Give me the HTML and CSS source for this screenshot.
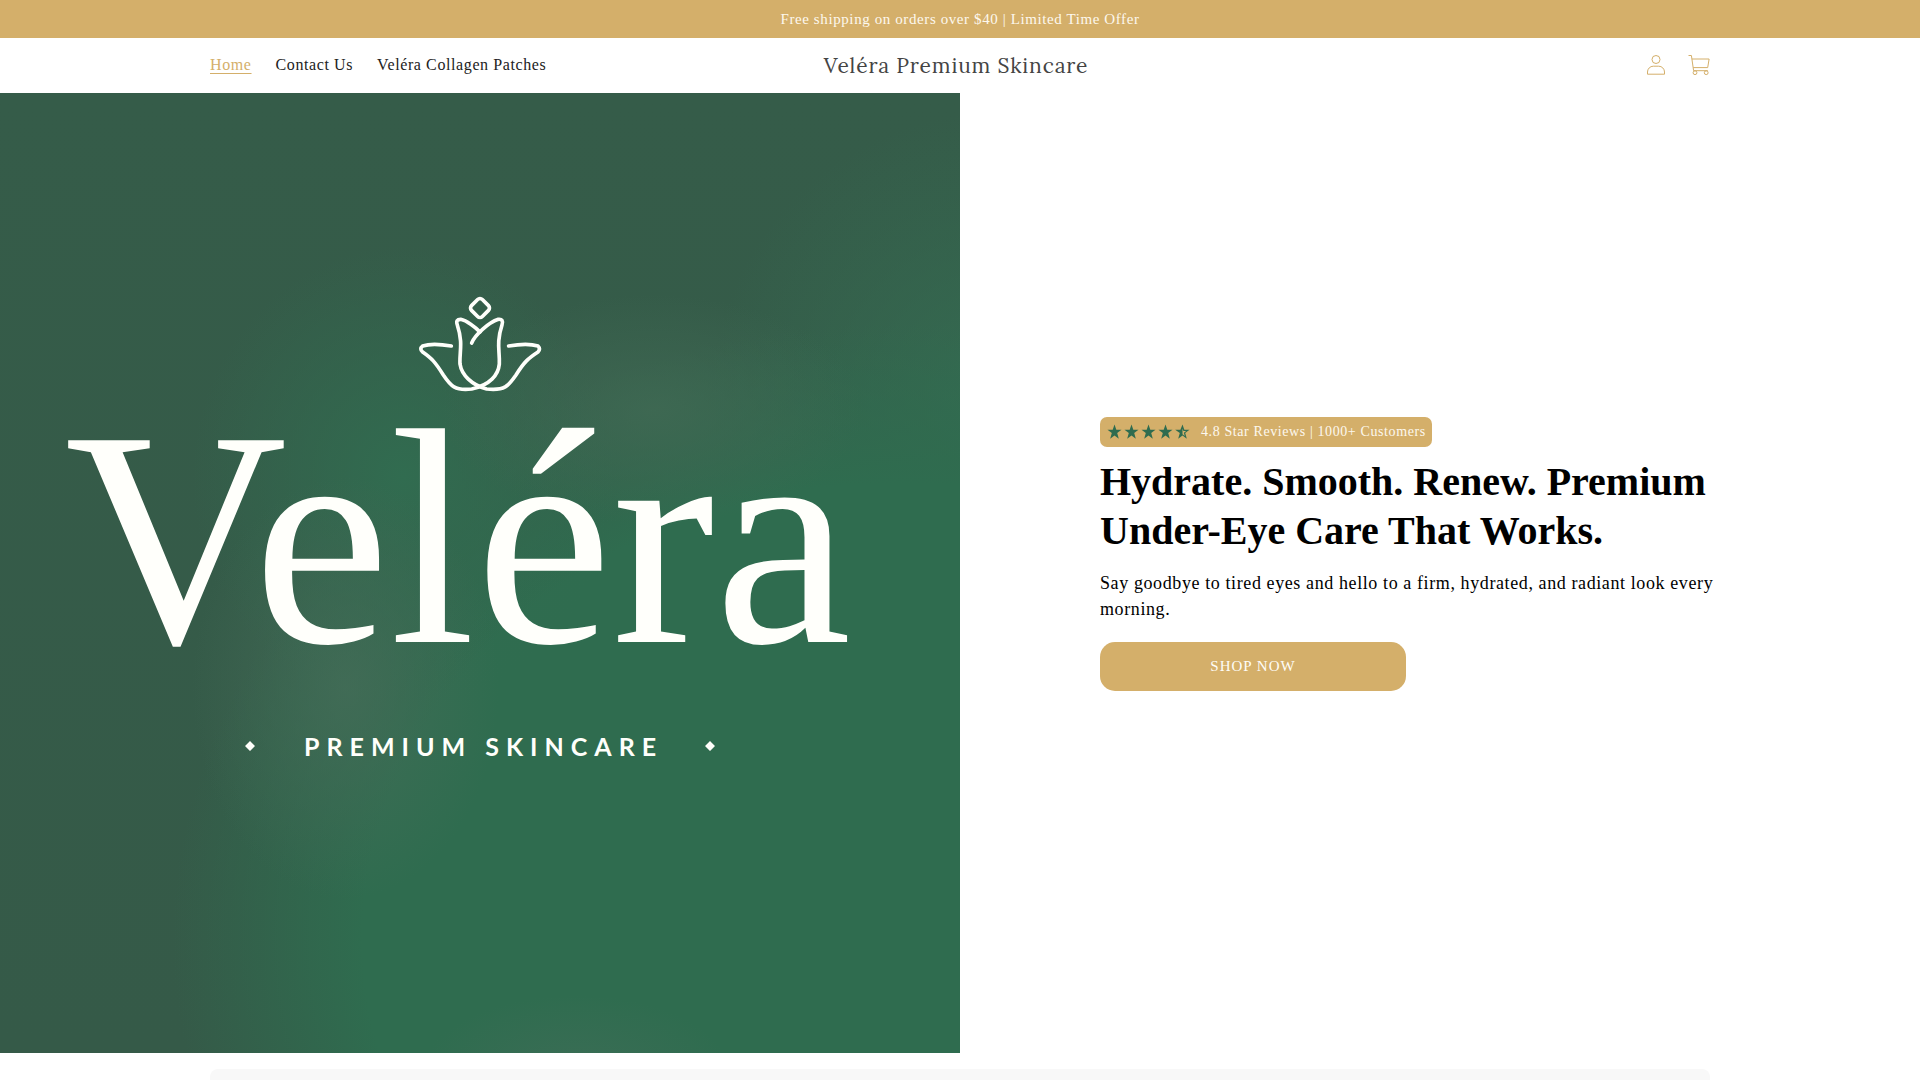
FILE: index.html
```html
<!DOCTYPE html>
<html lang="en">
<head>
    <meta charset="UTF-8">
    <meta name="viewport" content="width=device-width, initial-scale=1">
    <title>Veléra Premium Skincare</title>
    <link rel="stylesheet" href="styles.css">
</head>
<body>
    <div class="announcement">
        <p>Free shipping on orders over $40 | Limited Time Offer</p>
    </div>

    <header class="header">
        <nav class="menu">
            <a class="active" href="#">Home</a>
            <a href="#">Contact Us</a>
            <a href="#">Veléra Collagen Patches</a>
        </nav>
        <a class="shop-name" href="#">Veléra Premium Skincare</a>
        <div class="header-icons">
            <a href="#" aria-label="Log in">
                <svg viewBox="0 0 20 22" width="20" height="22">
                    <circle cx="10" cy="5.5" r="4"/>
                    <path d="M1.5 20.2V18a5.8 5.8 0 0 1 5.8-5.8h5.4a5.8 5.8 0 0 1 5.8 5.8v2.2z"/>
                </svg>
            </a>
            <a href="#" aria-label="Cart">
                <svg viewBox="0 0 22 22" width="22" height="22">
                    <path d="M.5 1.5h2.9l2.2 15.2h14.2"/>
                    <path d="M3.9 5h17.2l-1.4 8.6H5.2"/>
                    <circle cx="7" cy="18.7" r="1.9"/>
                    <circle cx="18.2" cy="18.7" r="1.9"/>
                </svg>
            </a>
        </div>
    </header>

    <main>
        <section class="hero">
            <div class="hero-image">
                <svg class="logo" viewBox="0 0 960 960" role="img" aria-label="Veléra Premium Skincare">
                    <!-- lotus -->
                    <g class="lotus" transform="translate(400 187) scale(.3333)">
                        <rect x="217" y="61" width="46" height="46" rx="10" transform="rotate(45 240 84)"/>
                        <path d="M215 189C225 165 265 128 295 118Q312 116 306 135C288 190 300 215 298 252C295 285 270 315 215 327C165 333 152 318 130 285C105 245 95 235 68 216Q57 207 68 198C85 192 120 192 154 198"/>
                        <path d="M240 156C225 140 200 122 182 118Q166 118 172 135C190 190 178 215 180 252C185 285 215 315 260 327C315 333 325 318 348 285C373 245 385 235 414 216Q423 207 414 198C395 192 360 192 326 198"/>
                    </g>
                    <text class="logo-name" x="458" y="549" text-anchor="middle">Veléra</text>
                    <text class="logo-sub" x="304" y="663">PREMIUM SKINCARE</text>
                    <path class="dot" d="M250 648l5 5-5 5-5-5zM710 648l5 5-5 5-5-5z"/>
                </svg>
            </div>

            <div class="hero-text">
                <div class="rating">
                    <svg viewBox="0 0 84 16" width="84" height="16">
                        <defs>
                            <path id="star" d="M7.5 .5l1.8 5.3h5.2l-4.3 3.3 1.6 5.6-4.3-3.3-4.3 3.3 1.6-5.6L.5 5.8h5.2z"/>
                        </defs>
                        <use href="#star" x="0"/>
                        <use href="#star" x="17"/>
                        <use href="#star" x="34"/>
                        <use href="#star" x="51"/>
                        <path d="M75.5 .5l1.8 5.3h5.2l-4.3 3.3 1.6 5.6-4.3-3.3-4.3 3.3 1.6-5.6-4.6-3.3h5.2zM75.5 4.5v5.7l2.2 1.7-.8-3.2 2.3-1.8h-2.8z" fill-rule="evenodd"/>
                    </svg>
                    <span>4.8 Star Reviews | 1000+ Customers</span>
                </div>
                <h1>Hydrate. Smooth. Renew. Premium Under-Eye Care That Works.</h1>
                <p>Say goodbye to tired eyes and hello to a firm, hydrated, and radiant look every morning.</p>
                <button class="shop-button" type="button">SHOP NOW</button>
            </div>
        </section>

        <section class="panel"></section>
    </main>
</body>
</html>
```
FILE: styles.css
```css
* {
    box-sizing: border-box;
}

body {
    margin: 0;
    background: #fff;
    color: #000;
    font-family: "Liberation Serif", "Times New Roman", serif;
    font-size: 15px;
    letter-spacing: 0.04em;
    overflow-x: hidden;
}

a {
    color: inherit;
    text-decoration: none;
}

.announcement {
    background: #d4af6a;
    color: #fdf8ee;
    text-align: center;
    line-height: 18px;
    padding: 10px;
}
.announcement p {
    margin: 0;
}

.header {
    display: grid;
    grid-template-columns: 1fr auto 1fr;
    align-items: center;
    max-width: 1500px;
    height: 55px;
    margin: 0 auto;
}
.menu {
    display: flex;
    gap: 24px;
    padding-bottom: 2px;
    font-size: 16px;
    line-height: 20px;
    color: #222;
}
.menu .active {
    color: #d4af6a;
    text-decoration: underline;
    text-underline-offset: 3px;
}
.shop-name {
    margin-right: 8px;
    color: #444;
    font-family: Lora, "Liberation Serif", serif;
    font-size: 21px;
    letter-spacing: 0.04em;
}
.header-icons {
    display: flex;
    justify-content: flex-end;
    gap: 22px;
    padding-bottom: 2px;
}
.header-icons svg {
    display: block;
    fill: none;
    stroke: #d4af6a;
    stroke-width: 1;
}

.hero {
    display: grid;
    grid-template-columns: 1fr 1fr;
}
.hero-image {
    background:
        radial-gradient(ellipse 16% 8% at 60% 102%, #3a6d55 0%, transparent 100%),
        radial-gradient(ellipse 16% 22% at 36% 62%, rgba(68, 109, 88, 0.8) 0%, transparent 100%),
        radial-gradient(ellipse 22% 12% at 68% 33%, rgba(64, 106, 84, 0.8) 0%, transparent 100%),
        radial-gradient(ellipse 22% 24% at 42% 40%, #316c50 0%, rgba(49, 108, 80, 0) 100%),
        radial-gradient(ellipse 76% 64% at 94% 88%, #2f6c4f 0%, #2f6c4f 74%, rgba(47, 108, 79, 0) 100%),
        radial-gradient(ellipse 30% 30% at 104% 32%, #346b51 0%, rgba(52, 107, 81, 0) 100%),
        linear-gradient(#355c49, #355a48);
}
.logo {
    display: block;
    width: 100%;
}
.lotus {
    fill: none;
    stroke: #fffffb;
    stroke-width: 11;
    stroke-linecap: round;
    stroke-linejoin: round;
}
.logo-name {
    fill: #fffffb;
    font-size: 308px;
    letter-spacing: 0;
}
.logo-sub {
    fill: #fffffb;
    font-family: Lato, sans-serif;
    font-size: 25px;
    font-weight: 700;
    letter-spacing: 7px;
}
.dot {
    fill: #fffffb;
}

.hero-text {
    display: flex;
    flex-direction: column;
    justify-content: center;
    align-items: flex-start;
    padding: 0 200px 39px 140px;
}
.rating {
    display: flex;
    align-items: center;
    gap: 10px;
    height: 30px;
    padding: 0 6px 0 7px;
    border-radius: 7px;
    background: #d4af6a;
    color: #fdf8ee;
    font-size: 14px;
    white-space: nowrap;
}
.rating svg {
    fill: #2f6c4f;
}
.hero-text h1 {
    margin: 10px 0 0;
    font-size: 40px;
    line-height: 49px;
    letter-spacing: 0;
}
.hero-text p {
    margin: 15px 0 20px;
    font-size: 18px;
    line-height: 26px;
}
.shop-button {
    width: 306px;
    max-width: 100%;
    height: 49px;
    border: 0;
    border-radius: 15px;
    background: #d4af6a;
    color: #fffdf8;
    font-family: inherit;
    font-size: 15px;
    letter-spacing: 1px;
}

.panel {
    max-width: 1500px;
    min-height: 320px;
    margin: 16px auto 0;
    border-radius: 8px;
    background: #f8f8f8;
}
```
